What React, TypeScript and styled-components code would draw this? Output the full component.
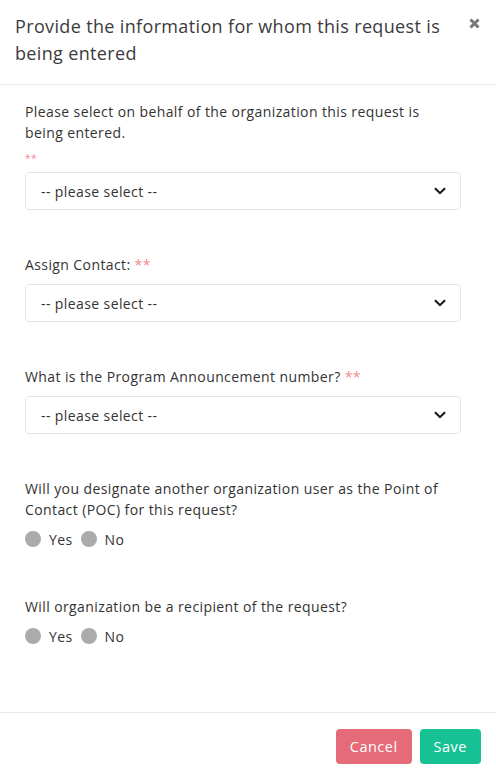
import React from "react";
import styled, { createGlobalStyle } from "styled-components";

const Global = createGlobalStyle`
  html, body { margin: 0; padding: 0; background: #fff; }
  body { font-family: "Open Sans", "Liberation Sans", sans-serif; color: #333; }
  * { box-sizing: border-box; }
`;

const Modal = styled.div`
  width: 496px;
  height: 777px;
  display: flex;
  flex-direction: column;
  background: #fff;
`;

const Header = styled.div`
  display: flex;
  align-items: flex-start;
  justify-content: space-between;
  padding: 13px 16px 17px 15px;
  border-bottom: 1px solid #e9ecef;
`;

const Title = styled.h5`
  margin: 0;
  font-size: 18px;
  line-height: 27px;
  font-weight: 400;
  letter-spacing: 0.35px;
  color: #3b3b3b;
  max-width: 440px;
`;

const Close = styled.button`
  border: 0;
  background: none;
  padding: 0;
  margin-top: 5px;
  width: 11px;
  height: 11px;
  display: flex;
  cursor: pointer;
`;

const Body = styled.div`
  flex: 1;
  padding: 16px 35px 0 25px;
  display: flex;
  flex-direction: column;
  gap: 44px;
`;

const Group = styled.div`
  display: flex;
  flex-direction: column;
`;

const Label = styled.label`
  font-size: 14px;
  line-height: 21px;
  letter-spacing: 0.4px;
  color: #333;
  margin-bottom: 9px;
`;

const Req = styled.span<{ $block?: boolean }>`
  color: #f08a93;
  ${(p) =>
    p.$block
      ? `display: block; font-size: 10px; line-height: 10px; margin-top: 10px;`
      : ``}
`;

const SelectBox = styled.div`
  height: 38px;
  border: 1px solid #e4e6ea;
  border-radius: 4px;
  display: flex;
  align-items: center;
  justify-content: space-between;
  padding: 0 14px 0 15px;
  font-size: 14px;
  letter-spacing: 0.4px;
  color: #333;
`;

const RadioRow = styled.div`
  display: flex;
  align-items: center;
  gap: 8px;
  height: 20px;
  margin-bottom: 3px;
  font-size: 14px;
  letter-spacing: 0.4px;
`;

const Dot = styled.span`
  width: 16px;
  height: 16px;
  border-radius: 50%;
  background: #ababab;
  display: inline-block;
`;

const Footer = styled.div`
  border-top: 1px solid #e9ecef;
  display: flex;
  justify-content: flex-end;
  gap: 8px;
  padding: 16px 15px 13px;
`;

const Btn = styled.button<{ $color: string }>`
  background: ${(p) => p.$color};
  color: #fff;
  border: 0;
  border-radius: 4px;
  height: 35px;
  padding: 0 14px;
  font-family: inherit;
  font-size: 14.5px;
  letter-spacing: 0.5px;
`;

const Chevron = () => (
  <svg width="12" height="8" viewBox="0 0 12 8">
    <path d="M1 1.2 L6 6.2 L11 1.2" fill="none" stroke="#111" strokeWidth="2" />
  </svg>
);

const Select = () => (
  <SelectBox>
    <span>-- please select --</span>
    <Chevron />
  </SelectBox>
);

const Radios = () => (
  <RadioRow>
    <Dot />
    <span>Yes</span>
    <Dot />
    <span>No</span>
  </RadioRow>
);

export default function App() {
  return (
    <Modal>
      <Global />
      <Header>
        <Title>Provide the information for whom this request is being entered</Title>
        <Close aria-label="close">
          <svg width="11" height="11" viewBox="0 0 11 11">
            <path d="M1.5 1.5 L9.5 9.5 M9.5 1.5 L1.5 9.5" stroke="#777" strokeWidth="3" />
          </svg>
        </Close>
      </Header>
      <Body>
        <Group>
          <Label>
            Please select on behalf of the organization this request is being entered.
            <Req $block>**</Req>
          </Label>
          <Select />
        </Group>
        <Group>
          <Label>
            Assign Contact: <Req>**</Req>
          </Label>
          <Select />
        </Group>
        <Group>
          <Label>
            What is the Program Announcement number? <Req>**</Req>
          </Label>
          <Select />
        </Group>
        <Group>
          <Label>Will you designate another organization user as the Point of Contact (POC) for this request?</Label>
          <Radios />
        </Group>
        <Group>
          <Label>Will organization be a recipient of the request?</Label>
          <Radios />
        </Group>
      </Body>
      <Footer>
        <Btn $color="#e46b77">Cancel</Btn>
        <Btn $color="#16c293">Save</Btn>
      </Footer>
    </Modal>
  );
}
